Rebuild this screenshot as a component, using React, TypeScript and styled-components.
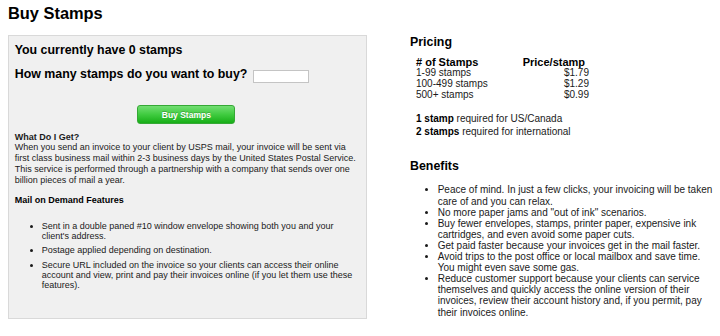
import React from "react";
import styled, { createGlobalStyle } from "styled-components";

const GlobalStyle = createGlobalStyle`
  html, body { margin: 0; padding: 0; background: #fff; }
  body {
    font-family: "Liberation Sans", Arial, Helvetica, sans-serif;
    color: #111;
  }
  * { box-sizing: border-box; }
`;

const Page = styled.div`
  padding: 3.4px 0 0 8px;
  width: 720px;
`;

const Title = styled.h1`
  margin: 0;
  font-size: 16.4px;
  line-height: 20px;
  font-weight: bold;
  color: #000;
`;

const Columns = styled.div`
  display: flex;
  align-items: flex-start;
  gap: 43px;
  margin-top: 11.6px;
`;

const Panel = styled.section`
  flex-shrink: 0;
  width: 359px;
  min-height: 284.5px;
  background: #f0f0f0;
  border: 1px solid #d9d9d9;
  padding: 7px 8px 0 5.7px;
`;

const PanelHeading = styled.div`
  font-size: 12.4px;
  line-height: 15px;
  font-weight: bold;
  color: #000;
`;

const AskRow = styled.div`
  display: flex;
  align-items: flex-start;
  gap: 6px;
  margin-top: 9px;
`;

const QtyInput = styled.input`
  width: 56px;
  height: 13.5px;
  margin: 3px 0 0 0;
  padding: 0 2px;
  border: 1px solid #c4c4c4;
  background: #fff;
  font-size: 9px;
  outline: none;
`;

const BuyButton = styled.button`
  display: block;
  margin: 22px auto 0 auto;
  width: 98px;
  height: 19px;
  border: 1px solid #35a835;
  border-radius: 3px;
  background: linear-gradient(to bottom, #72de72 0%, #40cb40 50%, #17ae17 100%);
  color: #fff;
  font-family: "Liberation Sans", Arial, sans-serif;
  font-size: 8.5px;
  font-weight: bold;
  text-shadow: 0 -1px 0 rgba(0, 0, 0, 0.2);
  padding: 0;
  cursor: pointer;
`;

const Info = styled.p`
  margin: 7.3px 0 0 0;
  font-size: 9px;
  line-height: 10.7px;
  color: #1a1a1a;
`;

const SmallHeading = styled.div<{ $gap: number }>`
  margin-top: ${(p) => p.$gap}px;
  font-size: 9px;
  line-height: 10.7px;
  font-weight: bold;
  color: #000;
`;

const FeatureList = styled.ul`
  margin: 16.3px 0 0 0;
  padding: 0 0 0 27px;
  font-size: 9px;
  line-height: 9.8px;
  color: #1a1a1a;
  list-style: disc;
`;

const FeatureItem = styled.li`
  margin-bottom: 5px;
`;

const Side = styled.aside`
  flex-shrink: 0;
  width: 306px;
`;

const SideHeading = styled.h2<{ $gap: number }>`
  margin: ${(p) => p.$gap}px 0 0 0;
  font-size: 12.4px;
  line-height: 15px;
  font-weight: bold;
  color: #000;
`;

const PriceTable = styled.div`
  display: grid;
  grid-template-columns: 106.7px 66.3px;
  margin: 6px 0 0 6px;
  font-size: 10px;
  line-height: 10.8px;
  color: #1a1a1a;
`;

const HeadCell = styled.div`
  font-size: 11px;
  line-height: 12.3px;
  font-weight: bold;
  color: #000;
`;

const Cell = styled.div<{ $right?: boolean }>`
  text-align: ${(p) => (p.$right ? "right" : "left")};
`;

const Notes = styled.div`
  margin: 12.5px 0 0 6px;
  font-size: 10px;
  line-height: 12.4px;
  color: #1a1a1a;

  b { color: #000; }
`;

const BenefitList = styled.ul`
  margin: 10px 0 0 0;
  padding: 0 0 0 27.7px;
  font-size: 10px;
  line-height: 11.1px;
  color: #1a1a1a;
  list-style: disc;
`;

const prices = [
  ["1-99 stamps", "$1.79"],
  ["100-499 stamps", "$1.29"],
  ["500+ stamps", "$0.99"],
];

const features = [
  "Sent in a double paned #10 window envelope showing both you and your client's address.",
  "Postage applied depending on destination.",
  "Secure URL included on the invoice so your clients can access their online account and view, print and pay their invoices online (if you let them use these features).",
];

const benefits = [
  "Peace of mind. In just a few clicks, your invoicing will be taken care of and you can relax.",
  'No more paper jams and "out of ink" scenarios.',
  "Buy fewer envelopes, stamps, printer paper, expensive ink cartridges, and even avoid some paper cuts.",
  "Get paid faster because your invoices get in the mail faster.",
  "Avoid trips to the post office or local mailbox and save time. You might even save some gas.",
  "Reduce customer support because your clients can service themselves and quickly access the online version of their invoices, review their account history and, if you permit, pay their invoices online.",
];

export default function App() {
  return (
    <>
      <GlobalStyle />
      <Page>
        <Title>Buy Stamps</Title>
        <Columns>
          <Panel>
            <PanelHeading>You currently have 0 stamps</PanelHeading>
            <AskRow>
              <PanelHeading>How many stamps do you want to buy?</PanelHeading>
              <QtyInput type="text" />
            </AskRow>
            <BuyButton type="button">Buy Stamps</BuyButton>
            <Info>
              <b>What Do I Get?</b>
              <br />
              When you send an invoice to your client by USPS mail, your invoice will be sent via
              first class business mail within 2-3 business days by the United States Postal
              Service. This service is performed through a partnership with a company that sends
              over one billion pieces of mail a year.
            </Info>
            <SmallHeading $gap={9.5}>Mail on Demand Features</SmallHeading>
            <FeatureList>
              {features.map((f) => (
                <FeatureItem key={f}>{f}</FeatureItem>
              ))}
            </FeatureList>
          </Panel>
          <Side>
            <SideHeading $gap={0}>Pricing</SideHeading>
            <PriceTable>
              <HeadCell># of Stamps</HeadCell>
              <HeadCell>Price/stamp</HeadCell>
              {prices.map(([range, price]) => (
                <React.Fragment key={range}>
                  <Cell>{range}</Cell>
                  <Cell $right>{price}</Cell>
                </React.Fragment>
              ))}
            </PriceTable>
            <Notes>
              <div>
                <b>1 stamp</b> required for US/Canada
              </div>
              <div>
                <b>2 stamps</b> required for international
              </div>
            </Notes>
            <SideHeading $gap={21.5}>Benefits</SideHeading>
            <BenefitList>
              {benefits.map((b) => (
                <li key={b}>{b}</li>
              ))}
            </BenefitList>
          </Side>
        </Columns>
      </Page>
    </>
  );
}
